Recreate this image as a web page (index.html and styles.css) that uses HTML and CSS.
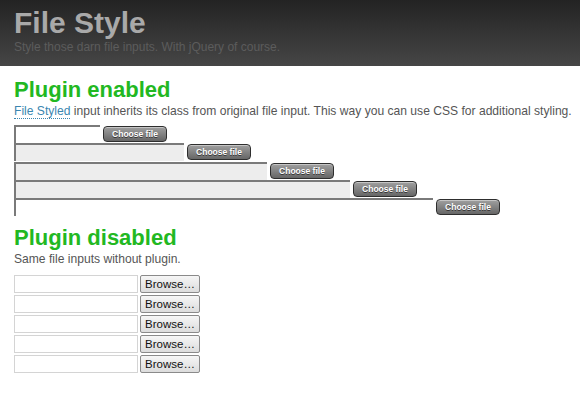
FILE: index.html
```html
<!DOCTYPE html>
<html lang="en">
<head>
  <meta charset="UTF-8" />
  <title>File Style</title>
  <link rel="stylesheet" href="styles.css">
</head>
<body>

  <!-- header -->
  <header>
    <h1>File Style</h1>
    <p>Style those darn file inputs. With jQuery of course.</p>
  </header>

  <!-- plugin enabled -->
  <section>
    <h2>Plugin enabled</h2>
    <p><a href="#">File Styled</a> input inherits its class from original file input. This way you can use CSS for additional styling.</p>

    <div class="file-list">
      <div class="styled-file">
        <span class="file-field w1"></span>
        <span class="choose">Choose file</span>
      </div>
      <div class="styled-file">
        <span class="file-field grey w2"></span>
        <span class="choose">Choose file</span>
      </div>
      <div class="styled-file">
        <span class="file-field grey w3"></span>
        <span class="choose">Choose file</span>
      </div>
      <div class="styled-file">
        <span class="file-field grey w4"></span>
        <span class="choose">Choose file</span>
      </div>
      <div class="styled-file">
        <span class="file-field w5"></span>
        <span class="choose">Choose file</span>
      </div>
    </div>
  </section>

  <!-- plugin disabled -->
  <section>
    <h2>Plugin disabled</h2>
    <p>Same file inputs without plugin.</p>

    <div class="plain-list">
      <div class="plain-file"><input type="text" /><button>Browse…</button></div>
      <div class="plain-file"><input type="text" /><button>Browse…</button></div>
      <div class="plain-file"><input type="text" /><button>Browse…</button></div>
      <div class="plain-file"><input type="text" /><button>Browse…</button></div>
      <div class="plain-file"><input type="text" /><button>Browse…</button></div>
    </div>
  </section>

</body>
</html>
```

FILE: styles.css
```css
body {
  margin: 0;
  font-family: 'Liberation Sans', Arial, sans-serif;
  font-size: 12.1px;
  color: #555;
  background: #fff;
}
header {
  height: 66px;
  padding: 6px 14px 0;
  box-sizing: border-box;
  background: linear-gradient(#232323, #464646);
}
header h1 {
  margin: 0;
  font-size: 30px;
  line-height: 34px;
  color: #a9a9a9;
}
header p {
  margin: 0;
  font-size: 12px;
  line-height: 14px;
  color: #5c5c5c;
}
section {
  padding: 0 14px;
}
h2 {
  margin: 0;
  font-size: 22px;
  line-height: 26px;
  color: #22b822;
}
section p {
  margin: 0;
  line-height: 16px;
  white-space: nowrap;
}
section:first-of-type {
  padding-top: 11px;
}
a {
  color: #3a86b0;
  text-decoration: none;
  border-bottom: 1px dotted #3a86b0;
}

/* styled file inputs */
.file-list {
  margin-top: 6px;
}
.styled-file {
  display: flex;
  align-items: flex-start;
  height: 18.3px;
}
.file-field {
  box-sizing: border-box;
  height: 18px;
  border-top: 2px solid #7a7a7a;
  border-left: 2px solid #7a7a7a;
  background: #fff;
}
.file-field.grey {
  background: #ededed;
}
.w1 { width: 86px; }
.w2 { width: 170px; }
.w3 { width: 253px; }
.w4 { width: 336px; }
.w5 { width: 419px; }
.choose {
  box-sizing: border-box;
  width: 64px;
  height: 16px;
  margin: 1px 0 0 3px;
  border: 1px solid #2e2e2e;
  border-radius: 4px;
  background: linear-gradient(#a0a0a0, #666);
  box-shadow: inset 0 1px 0 rgba(255, 255, 255, 0.4);
  color: #fff;
  font-size: 8.5px;
  font-weight: bold;
  line-height: 14px;
  text-align: center;
  text-shadow: 0 1px 0 #333;
}

/* plain inputs */
section + section {
  padding-top: 9px;
}
.plain-list {
  margin-top: 8px;
}
.plain-file {
  display: flex;
  gap: 2px;
  height: 20px;
}
.plain-file input {
  box-sizing: border-box;
  width: 124px;
  height: 18px;
  margin: 0;
  border: 1px solid #d4d4d4;
  background: #fff;
}
.plain-file button {
  box-sizing: border-box;
  width: 60px;
  height: 18px;
  padding: 0;
  border: 1px solid #8a8a8a;
  border-radius: 2px;
  background: linear-gradient(#f6f6f6, #dcdcdc);
  font-family: 'Liberation Sans', Arial, sans-serif;
  font-size: 11.5px;
  color: #111;
}
```
